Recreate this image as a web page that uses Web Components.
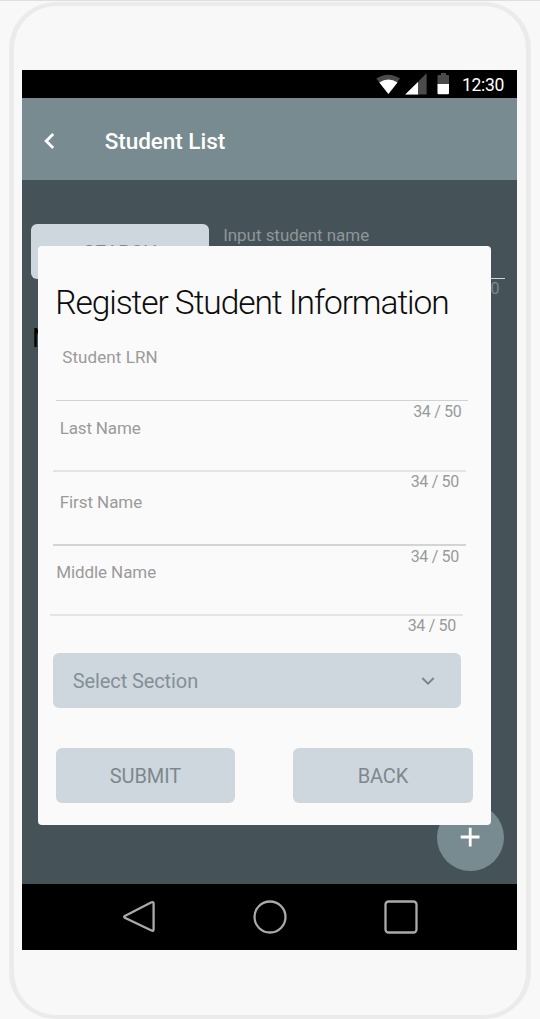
<!DOCTYPE html>
<html lang="en">
<head>
<meta charset="utf-8">
<title>Student List</title>
<style>
html,body{margin:0;height:1019px;overflow:hidden}
body{background:#f8f8f8;font-family:Roboto,"Liberation Sans",sans-serif;box-sizing:border-box;border-top:1px solid #dde0df}
</style>
</head>
<body>
<phone-frame>
  <status-bar>12:30</status-bar>
  <app-bar>Student List</app-bar>
  <student-page></student-page>
  <nav-bar></nav-bar>
</phone-frame>
<script>
const define = (name, html, extra) => customElements.define(name, class extends HTMLElement {
  constructor() {
    super();
    const t = document.createElement('template');
    t.innerHTML = html;
    this.attachShadow({mode: 'open'}).append(t.content.cloneNode(true));
  }
  connectedCallback() { if (extra) extra(this, this.shadowRoot); }
});

/* Single line of text tracked to a given width */
define('fit-text', `<style>:host{display:inline-block;white-space:nowrap;flex:none}span{display:inline-block}</style><span><slot></slot></span>`,
  (el, root) => {
    const fit = () => {
      const s = root.querySelector('span'), w = +el.getAttribute('w');
      const n = root.querySelector('slot').assignedNodes({flatten: true}).map(x => x.textContent).join('').trim().length;
      if (n < 2) return;
      s.style.letterSpacing = '0px';
      const d = (w - s.getBoundingClientRect().width) / (n - 1);
      s.style.letterSpacing = d + 'px';
      s.style.marginRight = -d + 'px';
    };
    requestAnimationFrame(fit);
  });

define('phone-frame', `<style>
:host{display:block;box-sizing:border-box;width:522px;height:1017px;margin:1px 0 0 9.4px;border:solid #ebebeb;border-width:4px 5px;border-radius:47px;padding:64px 8px 0 7.8px}
.screen{display:flex;flex-direction:column;width:495.2px;height:880px;background:#455257}
</style><div class="screen"><slot></slot></div>`);

define('status-bar', `<style>
:host{display:flex;box-sizing:border-box;height:27.5px;background:#000;color:#fff;align-items:center;justify-content:flex-end;padding-right:13px;font-size:17.5px;line-height:27px;font-weight:400}
svg{flex:none;margin-right:12px}
fit-text{padding-top:4px}
</style>
<svg width="74" height="27" viewBox="376 70 74 27">
<path d="M376.3 78.600Q388 70.800 400 78.600L388.400 94Z" fill="#4b4b4b"/><path d="M379.300 82.500Q388.300 76.700 397.500 82.500L388.400 94Z" fill="#fff"/>
<path d="M405.200 94.500L426.600 73.300V94.500Z" fill="#4b4b4b"/><path d="M405.200 94.500L418 82V94.500Z" fill="#fff"/>
<path d="M441 73h5v2h2q1 0 1 1v9H437.500v-9q0-1 1-1h2.500Z" fill="#4b4b4b"/><path d="M437.500 84H449v9q0 1.200-1 1.200h-9.500q-1 0-1-1.200Z" fill="#fff"/>
</svg><fit-text w="42.5"><slot></slot></fit-text>`);

define('app-bar', `<style>
:host{display:flex;box-sizing:border-box;height:82.5px;background:#788b90;color:#fff;align-items:center;padding:4.500px 0 0 21px;font-size:22.5px;line-height:28px;font-weight:500}
svg{flex:none;margin-right:48.5px}
</style>
<svg width="13" height="20" viewBox="0 0 13 20"><path d="M10.200 3L3.200 10L10.200 17" fill="none" stroke="#fff" stroke-width="2.800"/></svg>
<fit-text w="120.5"><slot></slot></fit-text>`);

define('ui-button', `<style>
:host{display:flex;box-sizing:border-box;width:179.5px;height:55px;border-radius:6px;background:#ced7dd;color:#7d888e;align-items:center;justify-content:center;font-size:20px;line-height:24px;padding-top:1px}
</style><slot></slot>`);

define('form-field', `<style>
:host{display:flex;flex-direction:column;width:412.5px;height:var(--h);margin-left:var(--x)}
.label{font-size:17px;line-height:14px;height:14px;color:#9a9a9a;padding-left:var(--lx)}
.line{height:var(--t,2px);margin-top:var(--gap,35px);background:var(--c,#e3e4e4);flex:none}
.count{font-size:16px;line-height:16px;color:#979a9b;align-self:flex-end;margin-top:var(--ct,2px);margin-right:6.5px}
</style><div class="label"><slot></slot></div><div class="line"></div><div class="count"><fit-text w="48.5">34 / 50</fit-text></div>`);

define('select-box', `<style>
:host{display:flex;box-sizing:border-box;width:408.2px;height:55px;margin:0 0 0 15px;border-radius:6px;background:#ced7dd;color:#848f95;align-items:center;justify-content:space-between;padding:0 26px 0 19.500px;font-size:20px;line-height:24px}
</style><slot></slot><svg width="14" height="10" viewBox="0 0 14 10"><path d="M1.300 2L7 7.600L12.700 2" fill="none" stroke="#7b8489" stroke-width="2"/></svg>`);

define('register-dialog', `<style>
:host{display:block;box-sizing:border-box;width:453px;height:578.5px;background:#fafafa;border-radius:4px;padding-top:36px}
h1{margin:0 0 26px 17px;height:42px;font-size:33.5px;line-height:42px;font-weight:300;color:#0c0c0c}
.actions{display:flex;gap:58px;margin:40px 0 0 17.5px}
</style>
<h1><fit-text w="394.5">Register Student Information</fit-text></h1>
<form-field style="--x:17.5px;--lx:6.5px;--h:71px;--t:1px;--gap:36px;--ct:3px;--c:#d1d2d2"><fit-text w="95.5">Student LRN</fit-text></form-field>
<form-field style="--x:15px;--lx:6.5px;--h:74px"><fit-text w="81">Last Name</fit-text></form-field>
<form-field style="--x:15px;--lx:6.5px;--ct:3px;--h:70px;--c:#d3d5d5"><fit-text w="82.5">First Name</fit-text></form-field>
<form-field style="--x:12px;--lx:6px;--h:88px"><fit-text w="100">Middle Name</fit-text></form-field>
<select-box><fit-text w="125.5">Select Section</fit-text></select-box>
<div class="actions"><ui-button><fit-text w="71.5">SUBMIT</fit-text></ui-button><ui-button><fit-text w="50.5">BACK</fit-text></ui-button></div>`);

define('fab-button', `<style>
:host{display:flex;width:67px;height:67px;border-radius:50%;background:#788b90;align-items:center;justify-content:center}
</style><svg width="67" height="67" viewBox="0 0 67 67"><path d="M23.700 33H42.500M33.200 23.700V42.500" stroke="#fff" stroke-width="2.800"/></svg>`);

define('student-page', `<style>
:host{display:block;box-sizing:border-box;position:relative;height:704px;background:#455257;padding:44px 12px 0 9px;overflow:hidden}
.search{display:flex;gap:14px;height:79px}
.input{flex:1;color:#8d9699;font-size:17px;line-height:22px;display:flex;flex-direction:column}
.line{height:1.5px;background:#cfd5d6;margin-top:31.5px;flex:none}
.count{align-self:flex-end;font-size:16px;line-height:20px;margin-right:6px;color:#7e888b}
.name{font-size:25px;line-height:30px;font-weight:400;color:#000;margin:21px 0 0 1px}
fab-button{position:absolute;left:415px;top:623.5px}
register-dialog{position:absolute;left:16px;top:66px}
ui-button{width:178px;padding-top:3px}
</style>
<div class="search"><ui-button><fit-text w="74">SEARCH</fit-text></ui-button>
<div class="input"><fit-text w="146">Input student name</fit-text><div class="line"></div><div class="count">34 / 50</div></div></div>
<div class="name">N</div>
<fab-button></fab-button>
<register-dialog></register-dialog>`);

define('nav-bar', `<style>
:host{display:flex;height:66px;background:#000;align-items:center;justify-content:space-between;box-sizing:border-box;padding:0 99px 0 100px}
</style>
<svg width="34" height="34" viewBox="0 0 34 34"><path d="M2.800 16L29.500 2.300Q31.600 1.500 31.600 3.500V29.300Q31.600 31.500 29.500 30.500L2.800 17.700Q1.500 16.800 2.800 16Z" fill="none" stroke="#aaa" stroke-width="2.300"/></svg>
<svg width="34" height="34" viewBox="0 0 34 34"><circle cx="17" cy="17" r="15.500" fill="none" stroke="#aaa" stroke-width="2.300"/></svg>
<svg width="34" height="34" viewBox="0 0 34 34"><rect x="1.500" y="1.500" width="31" height="31" rx="3" fill="none" stroke="#aaa" stroke-width="2.300"/></svg>`);
</script>
</body>
</html>
